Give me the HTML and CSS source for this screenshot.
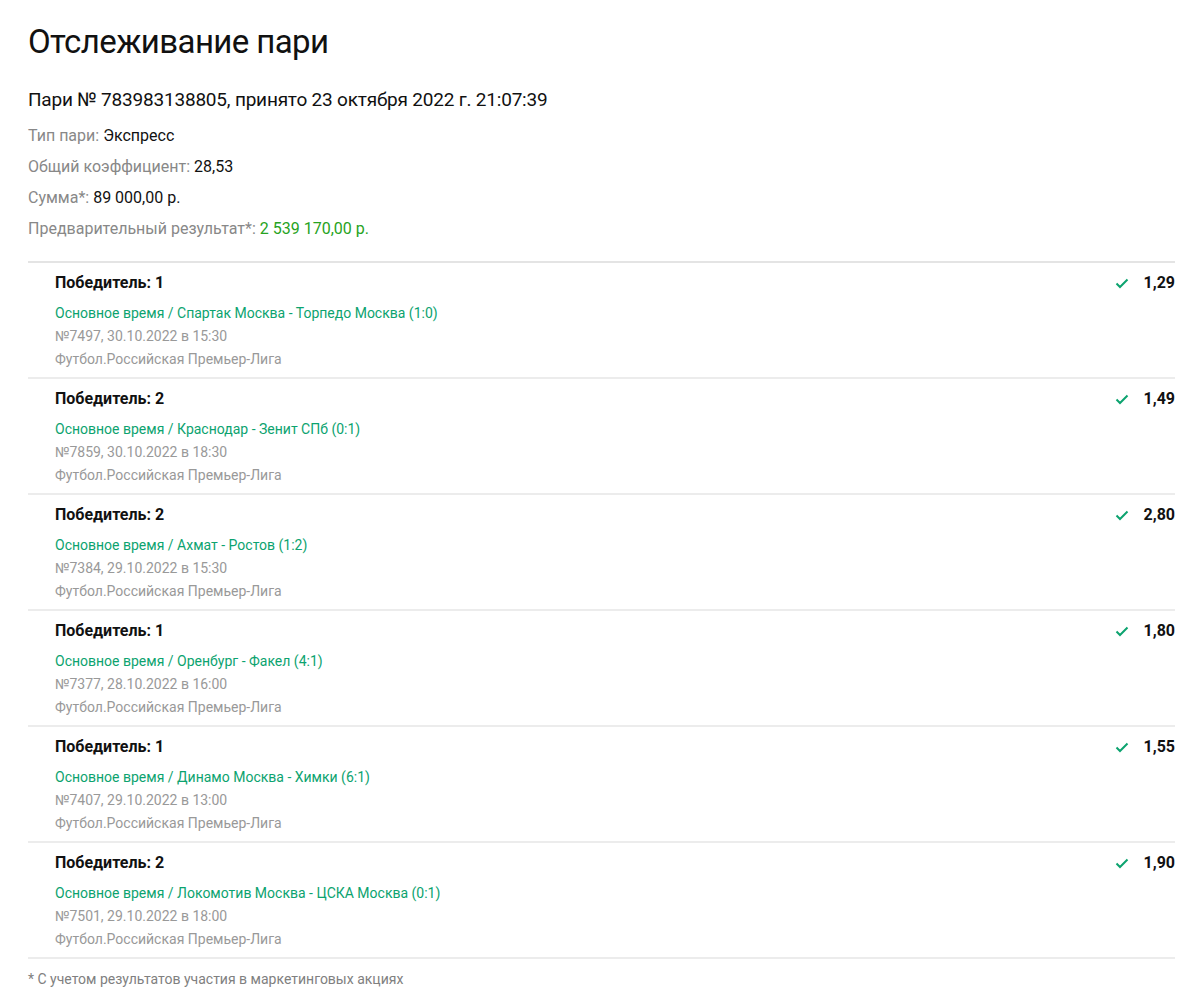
FILE: index.html
```html
<!DOCTYPE html>
<html lang="ru">

<head>
  <meta charset="UTF-8" />
  <meta name="viewport" content="width=device-width, initial-scale=1.0" />
  <title>Отслеживание пари</title>
  <link rel="stylesheet" href="styles.css">
</head>

<body>
  <div class="page">
    <h1 class="title">Отслеживание пари</h1>

    <div class="bet-head">Пари № 783983138805, принято 23 октября 2022 г. 21:07:39</div>
    <div class="info">
      <div class="info-row"><span class="label">Тип пари:</span> Экспресс</div>
      <div class="info-row"><span class="label">Общий коэффициент:</span> 28,53</div>
      <div class="info-row"><span class="label">Сумма*:</span> 89 000,00 р.</div>
      <div class="info-row"><span class="label">Предварительный результат*:</span> <span class="win">2 539 170,00 р.</span></div>
    </div>

    <div class="events">
      <div class="event">
        <div class="event-body">
          <div class="outcome">Победитель: 1</div>
          <div class="match">Основное время / Спартак Москва - Торпедо Москва (1:0)</div>
          <div class="meta">№7497, 30.10.2022 в 15:30</div>
          <div class="meta">Футбол.Российская Премьер-Лига</div>
        </div>
        <div class="event-coef">
          <svg class="check" viewBox="0 0 14 14" width="14" height="14"><path d="M1.5 7.5 L5 11 L12.5 3.5" /></svg>
          <span class="coef">1,29</span>
        </div>
      </div>

      <div class="event">
        <div class="event-body">
          <div class="outcome">Победитель: 2</div>
          <div class="match">Основное время / Краснодар - Зенит СПб (0:1)</div>
          <div class="meta">№7859, 30.10.2022 в 18:30</div>
          <div class="meta">Футбол.Российская Премьер-Лига</div>
        </div>
        <div class="event-coef">
          <svg class="check" viewBox="0 0 14 14" width="14" height="14"><path d="M1.5 7.5 L5 11 L12.5 3.5" /></svg>
          <span class="coef">1,49</span>
        </div>
      </div>

      <div class="event">
        <div class="event-body">
          <div class="outcome">Победитель: 2</div>
          <div class="match">Основное время / Ахмат - Ростов (1:2)</div>
          <div class="meta">№7384, 29.10.2022 в 15:30</div>
          <div class="meta">Футбол.Российская Премьер-Лига</div>
        </div>
        <div class="event-coef">
          <svg class="check" viewBox="0 0 14 14" width="14" height="14"><path d="M1.5 7.5 L5 11 L12.5 3.5" /></svg>
          <span class="coef">2,80</span>
        </div>
      </div>

      <div class="event">
        <div class="event-body">
          <div class="outcome">Победитель: 1</div>
          <div class="match">Основное время / Оренбург - Факел (4:1)</div>
          <div class="meta">№7377, 28.10.2022 в 16:00</div>
          <div class="meta">Футбол.Российская Премьер-Лига</div>
        </div>
        <div class="event-coef">
          <svg class="check" viewBox="0 0 14 14" width="14" height="14"><path d="M1.5 7.5 L5 11 L12.5 3.5" /></svg>
          <span class="coef">1,80</span>
        </div>
      </div>

      <div class="event">
        <div class="event-body">
          <div class="outcome">Победитель: 1</div>
          <div class="match">Основное время / Динамо Москва - Химки (6:1)</div>
          <div class="meta">№7407, 29.10.2022 в 13:00</div>
          <div class="meta">Футбол.Российская Премьер-Лига</div>
        </div>
        <div class="event-coef">
          <svg class="check" viewBox="0 0 14 14" width="14" height="14"><path d="M1.5 7.5 L5 11 L12.5 3.5" /></svg>
          <span class="coef">1,55</span>
        </div>
      </div>

      <div class="event">
        <div class="event-body">
          <div class="outcome">Победитель: 2</div>
          <div class="match">Основное время / Локомотив Москва - ЦСКА Москва (0:1)</div>
          <div class="meta">№7501, 29.10.2022 в 18:00</div>
          <div class="meta">Футбол.Российская Премьер-Лига</div>
        </div>
        <div class="event-coef">
          <svg class="check" viewBox="0 0 14 14" width="14" height="14"><path d="M1.5 7.5 L5 11 L12.5 3.5" /></svg>
          <span class="coef">1,90</span>
        </div>
      </div>
    </div>

    <div class="note">* С учетом результатов участия в маркетинговых акциях</div>
  </div>
</body>

</html>
```

FILE: styles.css
```css
body,
html {
  margin: 0;
  background: #fff;
  font-family: Roboto, "Liberation Sans", sans-serif;
  color: #111;
}

.page {
  width: 1147px;
  padding: 18px 0 0 28px;
}

.title {
  margin: 0;
  font-size: 33px;
  font-weight: 400;
  line-height: 48px;
  letter-spacing: -0.6px;
}

.bet-head {
  margin-top: 20px;
  font-size: 19px;
  line-height: 28px;
  letter-spacing: -0.2px;
}

.info {
  margin-top: 6px;
}

.info-row {
  font-size: 16px;
  line-height: 31px;
}

.label {
  color: #888;
}

.win {
  color: #27a322;
}

.events {
  margin-top: 17px;
  border-top: 2px solid #e4e4e4;
}

.event {
  display: flex;
  justify-content: space-between;
  padding: 9px 0 6px 27px;
  border-bottom: 2px solid #ececec;
}

.outcome {
  font-size: 16px;
  font-weight: 700;
  line-height: 22px;
  margin-bottom: 8px;
}

.match {
  color: #0ca36f;
  font-size: 14px;
  line-height: 23px;
}

.meta {
  color: #999;
  font-size: 14px;
  line-height: 23px;
}

.event-coef {
  display: flex;
  align-items: flex-start;
  gap: 15px;
  height: 22px;
  line-height: 22px;
}

.check {
  margin-top: 4px;
  fill: none;
  stroke: #0ca36f;
  stroke-width: 2;
}

.coef {
  font-size: 16px;
  font-weight: 700;
}

.note {
  padding-top: 8px;
  font-size: 14px;
  line-height: 24px;
  color: #808080;
}
```
